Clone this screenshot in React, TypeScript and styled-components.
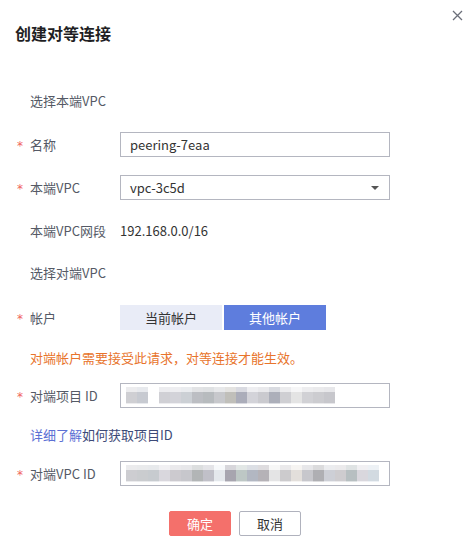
import React from "react";
import styled, { createGlobalStyle } from "styled-components";

const Global = createGlobalStyle`
  html, body { margin: 0; padding: 0; background: #fff; }
  body { font-family: "Noto Sans CJK SC", "Noto Sans", sans-serif; }
  * { box-sizing: border-box; }
`;

const Dialog = styled.div`
  position: relative;
  width: 472px;
  height: 547px;
  background: #fff;
  padding: 22px 0 0 0;
`;

const Title = styled.h1`
  margin: 0 0 0 15px;
  font-size: 16px;
  line-height: 22px;
  font-weight: 700;
  color: #1f1f24;
`;

const Close = styled.button`
  position: absolute;
  top: 8px;
  right: 8px;
  width: 14px;
  height: 14px;
  padding: 0;
  border: 0;
  background: transparent;
  display: flex;
  align-items: center;
  justify-content: center;
`;

const Form = styled.div`
  display: flex;
  flex-direction: column;
  padding-left: 17px;
`;

const Section = styled.div<{ $mt: number }>`
  margin-top: ${(p) => p.$mt}px;
  padding-left: 13px;
  height: 20px;
  line-height: 20px;
  font-size: 13px;
  color: #555a66;
`;

const Row = styled.div<{ $mt: number }>`
  margin-top: ${(p) => p.$mt}px;
  display: flex;
  align-items: center;
  height: 25px;
`;

const Star = styled.span<{ $show?: boolean }>`
  width: 13px;
  font-family: "DejaVu Sans", sans-serif;
  font-size: 12px;
  color: #f0635c;
  visibility: ${(p) => (p.$show ? "visible" : "hidden")};
  line-height: 25px;
  padding-top: 4px;
`;

const Label = styled.span`
  width: 90px;
  font-size: 13px;
  color: #555a66;
  white-space: nowrap;
`;

const Input = styled.div`
  width: 270px;
  height: 25px;
  border: 1px solid #b4b6c0;
  display: flex;
  align-items: center;
  padding-left: 9px;
  padding-right: 10px;
  font-size: 13px;
  color: #333;
  position: relative;
  justify-content: space-between;
`;

const Value = styled.span`
  font-size: 13px;
  color: #333;
`;

const Caret = styled.span`
  width: 0;
  height: 0;
  border-left: 4px solid transparent;
  border-right: 4px solid transparent;
  border-top: 4px solid #555;
`;

const Toggle = styled.div`
  display: flex;
  gap: 2px;
`;

const ToggleBtn = styled.button<{ $active?: boolean }>`
  width: 102px;
  height: 25px;
  border: 0;
  padding: 0;
  font-family: inherit;
  font-size: 13px;
  background: ${(p) => (p.$active ? "#5e7ddd" : "#e9ecf7")};
  color: ${(p) => (p.$active ? "#fff" : "#333")};
`;

const Note = styled.div<{ $mt: number; $color?: string }>`
  margin-top: ${(p) => p.$mt}px;
  padding-left: 13px;
  height: 20px;
  line-height: 20px;
  font-size: 13px;
  color: ${(p) => p.$color || "#e8742c"};
`;

const Link = styled.a`
  color: #5c70d4;
  text-decoration: none;
`;

const LinkRest = styled.span`
  color: #3d4a78;
`;

const Mosaic = styled.div`
  display: flex;
  height: 17px;
  margin-left: -4px;
`;

const Tile = styled.span<{ $c: string; $top: string }>`
  width: 11px;
  height: 17px;
  background: linear-gradient(
    to bottom,
    ${(p) => p.$top} 0,
    ${(p) => p.$top} 5px,
    ${(p) => p.$c} 5px,
    ${(p) => p.$c} 16px,
    ${(p) => p.$top} 16px
  );
`;

const Footer = styled.div`
  margin-top: 25px;
  display: flex;
  justify-content: center;
  gap: 8px;
  padding-right: 2px;
`;

const Btn = styled.button<{ $primary?: boolean }>`
  width: 62px;
  height: 25px;
  padding: 0;
  font-family: inherit;
  font-size: 13px;
  border-radius: 2px;
  border: 1px solid ${(p) => (p.$primary ? "#f4706b" : "#b0b2bd")};
  background: ${(p) => (p.$primary ? "#f4706b" : "#fff")};
  color: ${(p) => (p.$primary ? "#fff" : "#333")};
`;

const projectTiles = [
  "#d8d8dc", "#cfd2da", "#ffffff", "#d9d9de", "#dcdce2", "#d5d9de", "#c4c6cb",
  "#bfc3c6", "#cfd0d4", "#c8c7c2", "#b2b4c2", "#dcdce2", "#d2d2d8", "#b3b6c2",
  "#d8d8dc", "#ededee", "#dadade", "#d4d4d9", "#cfcfd4",
];

const vpcTiles = [
  "#d6d6da", "#d2d4d8", "#cfd3d8", "#e2e0e6", "#d4d2d8", "#cfcfd4", "#b9bdbe",
  "#c8c8d0", "#eef2f6", "#aeacb6", "#c5cfcd", "#b9bfca", "#bdb9bf", "#eeeeef",
  "#d4d3d6", "#ece8e4", "#cfcfd4", "#b6b6ba", "#d6d8df", "#d7d5d8", "#bfc7c9",
  "#e2e0e6", "#dbe3ea",
];

const lighten = (hex: string) => {
  const n = parseInt(hex.slice(1), 16);
  const r = (n >> 16) & 255, g = (n >> 8) & 255, b = n & 255;
  const f = (v: number) => Math.round(v + (255 - v) * 0.5);
  return `rgb(${f(r)},${f(g)},${f(b)})`;
};

const darken = (hex: string) => {
  const n = parseInt(hex.slice(1), 16);
  const r = (n >> 16) & 255, g = (n >> 8) & 255, b = n & 255;
  const f = (v: number) => Math.round(v * 0.96);
  return `rgb(${f(r)},${f(g)},${f(b)})`;
};

const Blur = ({ tiles }: { tiles: string[] }) => (
  <Mosaic>
    {tiles.map((c, i) => (
      <Tile
        key={i}
        $c={c === "#ffffff" ? "#fff" : darken(c)}
        $top={c === "#ffffff" ? "#fff" : lighten(c)}
      />
    ))}
  </Mosaic>
);

export default function App() {
  return (
    <>
      <Global />
      <Dialog>
        <Title>创建对等连接</Title>
        <Close aria-label="close">
          <svg width="11" height="11" viewBox="0 0 11 11">
            <path d="M1 1L10 10M10 1L1 10" stroke="#6b6f7a" strokeWidth="1.3" />
          </svg>
        </Close>
        <Form>
          <Section $mt={47}>选择本端VPC</Section>
          <Row $mt={21}>
            <Star $show>*</Star>
            <Label>名称</Label>
            <Input>peering-7eaa</Input>
          </Row>
          <Row $mt={18}>
            <Star $show>*</Star>
            <Label>本端VPC</Label>
            <Input>
              <span>vpc-3c5d</span>
              <Caret />
            </Input>
          </Row>
          <Row $mt={18}>
            <Star />
            <Label>本端VPC网段</Label>
            <Value>192.168.0.0/16</Value>
          </Row>
          <Section $mt={20}>选择对端VPC</Section>
          <Row $mt={22}>
            <Star $show>*</Star>
            <Label>帐户</Label>
            <Toggle>
              <ToggleBtn>当前帐户</ToggleBtn>
              <ToggleBtn $active>其他帐户</ToggleBtn>
            </Toggle>
          </Row>
          <Note $mt={18}>对端帐户需要接受此请求，对等连接才能生效。</Note>
          <Row $mt={15}>
            <Star $show>*</Star>
            <Label>对端项目 ID</Label>
            <Input>
              <Blur tiles={projectTiles} />
            </Input>
          </Row>
          <Note $mt={17}>
            <Link href="#">详细了解</Link>
            <LinkRest>如何获取项目ID</LinkRest>
          </Note>
          <Row $mt={16}>
            <Star $show>*</Star>
            <Label>对端VPC ID</Label>
            <Input>
              <Blur tiles={vpcTiles} />
            </Input>
          </Row>
        </Form>
        <Footer>
          <Btn $primary>确定</Btn>
          <Btn>取消</Btn>
        </Footer>
      </Dialog>
    </>
  );
}
